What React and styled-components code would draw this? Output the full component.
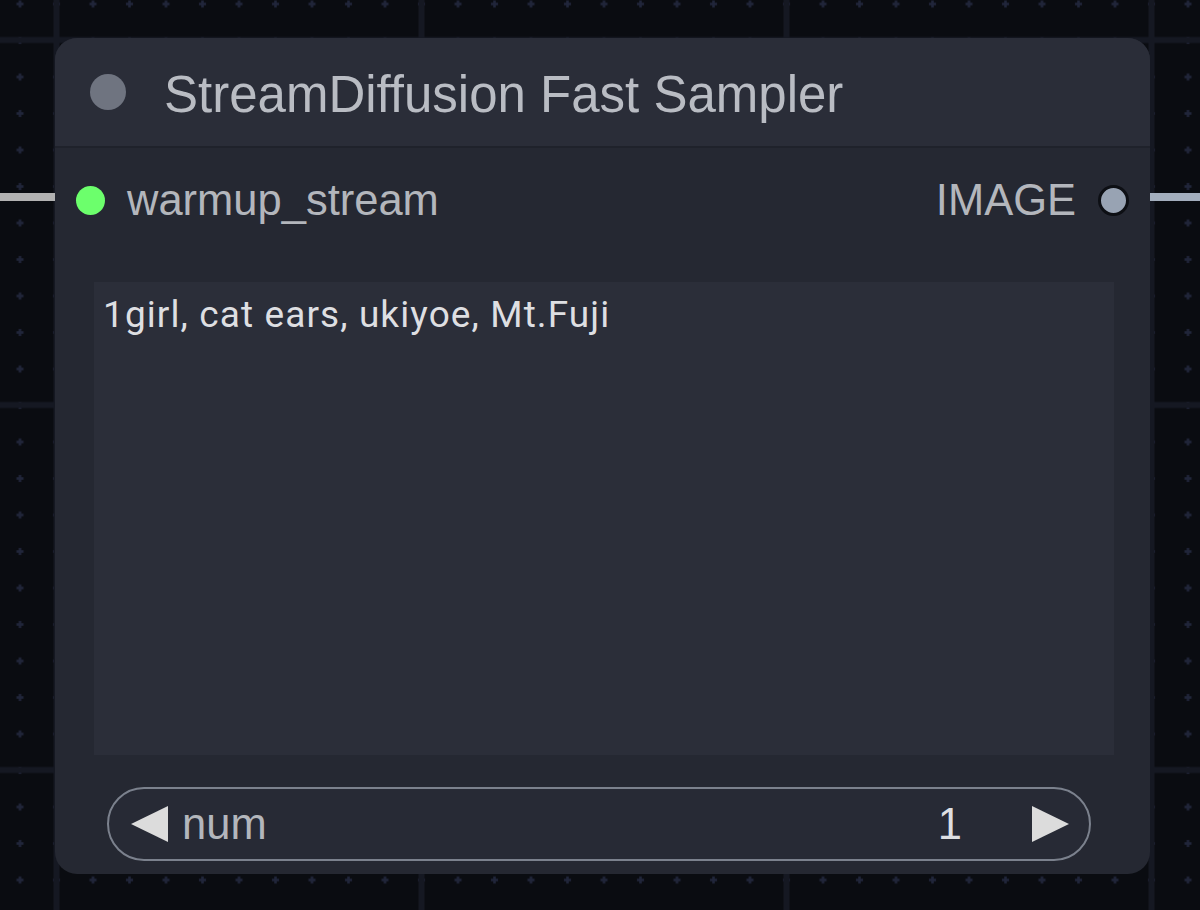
import styled, { createGlobalStyle } from "styled-components";

const GlobalStyle = createGlobalStyle`
  html, body {
    margin: 0;
    padding: 0;
    background: #0a0c11;
    overflow: hidden;
  }
`;

const Canvas = styled.div`
  position: relative;
  width: 1200px;
  height: 910px;
  overflow: hidden;
  background: #0a0c11;
  font-family: "Liberation Sans", Arial, sans-serif;
`;

const Backdrop = styled.svg`
  position: absolute;
  inset: 0;
`;

const Node = styled.div`
  position: absolute;
  left: 55px;
  top: 38px;
  width: 1095px;
  height: 836px;
  border-radius: 22px;
  background: #252832;
  overflow: hidden;
  display: flex;
  flex-direction: column;
`;

const Header = styled.div`
  height: 108px;
  flex-shrink: 0;
  background: #2a2d38;
  border-bottom: 2px solid #1f222b;
  display: flex;
  align-items: center;
  padding-left: 35px;
  gap: 38px;
`;

const Dot = styled.span`
  width: ${(p) => p.size}px;
  height: ${(p) => p.size}px;
  border-radius: 50%;
  flex-shrink: 0;
  box-sizing: border-box;
  background: ${(p) => p.color};
  border: ${(p) => (p.ring ? "3px solid #0d0f14" : "none")};
`;

const Title = styled.span`
  font-size: 51px;
  line-height: 1;
  margin-top: 4px;
  color: #b9bcc3;
`;

const Body = styled.div`
  flex: 1;
  display: flex;
  flex-direction: column;
`;

const SlotRow = styled.div`
  height: 52px;
  margin-top: 26px;
  display: flex;
  align-items: center;
  justify-content: space-between;
  padding: 0 21px 0 21px;
`;

const Slot = styled.div`
  display: flex;
  align-items: center;
  gap: ${(p) => p.gap}px;
  font-size: 43.5px;
  color: #b3b6bc;
`;

const PromptBox = styled.div`
  margin: 56px 36px 0 39px;
  height: 473px;
  box-sizing: border-box;
  background: #2b2e39;
  padding: 10px 9px;
  font-family: Roboto, "Liberation Sans", sans-serif;
  font-size: 37px;
  letter-spacing: 1.1px;
  line-height: 46px;
  color: #dedfe2;
`;

const NumberWidget = styled.div`
  margin: 32px 59px 0 52px;
  height: 74px;
  box-sizing: border-box;
  border: 2.5px solid #7b818d;
  border-radius: 37px;
  background: #272a35;
  display: flex;
  align-items: center;
  padding: 0 20px 0 22px;
  font-size: 43.5px;
`;

const Arrow = styled.span`
  width: 0;
  height: 0;
  border-top: 18px solid transparent;
  border-bottom: 18px solid transparent;
  ${(p) =>
    p.dir === "left"
      ? "border-right: 37px solid #dcdcdc;"
      : "border-left: 37px solid #dcdcdc;"}
`;

const WidgetLabel = styled.span`
  flex: 1;
  margin-left: 14px;
  color: #b3b6bc;
`;

const WidgetValue = styled.span`
  color: #dedfe2;
  margin-right: 70px;
`;

function Grid() {
  return (
    <Backdrop width="1200" height="910">
      <defs>
        <pattern
          id="minor"
          patternUnits="userSpaceOnUse"
          x="1.75"
          y="-14.25"
          width="36.5"
          height="36.5"
        >
          <rect x="14.75" y="17" width="7" height="2.5" fill="#20253a" />
          <rect x="17" y="14.75" width="2.5" height="7" fill="#20253a" />
        </pattern>
        <pattern
          id="major"
          patternUnits="userSpaceOnUse"
          x="-126"
          y="-142.5"
          width="365"
          height="365"
        >
          <rect x="179.5" y="0" width="6" height="365" fill="#151822" />
          <rect x="0" y="179.5" width="365" height="6" fill="#151822" />
        </pattern>
      </defs>
      <rect width="1200" height="910" fill="url(#minor)" />
      <rect width="1200" height="910" fill="url(#major)" />
      <rect x="0" y="193" width="60" height="8" fill="#b2b2b2" />
      <rect x="1145" y="193" width="55" height="8" fill="#a3aebd" />
    </Backdrop>
  );
}

export default function App() {
  return (
    <>
      <GlobalStyle />
      <Canvas>
        <Grid />
        <Node>
          <Header>
            <Dot size={36} color="#6f7480" />
            <Title>StreamDiffusion Fast Sampler</Title>
          </Header>
          <Body>
            <SlotRow>
              <Slot gap={22}>
                <Dot size={29} color="#6cff6c" />
                warmup_stream
              </Slot>
              <Slot gap={22}>
                IMAGE
                <Dot size={31} color="#98a3b3" ring />
              </Slot>
            </SlotRow>
            <PromptBox>1girl, cat ears, ukiyoe, Mt.Fuji</PromptBox>
            <NumberWidget>
              <Arrow dir="left" />
              <WidgetLabel>num</WidgetLabel>
              <WidgetValue>1</WidgetValue>
              <Arrow dir="right" />
            </NumberWidget>
          </Body>
        </Node>
      </Canvas>
    </>
  );
}
